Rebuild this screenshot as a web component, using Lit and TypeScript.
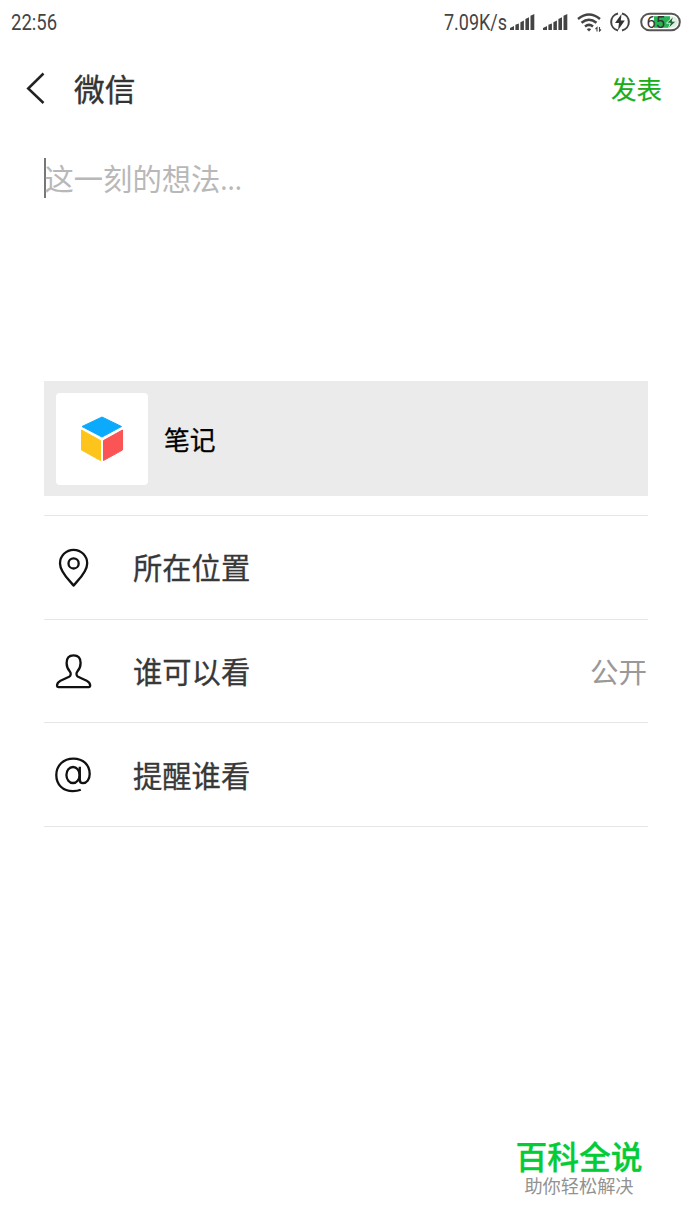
import { LitElement, html, css, svg } from "lit";
import { customElement, property } from "lit/decorators.js";

const signal = html`<svg width="25" height="18" viewBox="0 0 25 18" fill="#444">
  <path d="M0 17v-2l4-2v4zM5.400 17v-5.200l3.500-1.400V17zM10.400 17V9.200l3.500-1.600V17zM15.400 17V6l3.600-1.800v12.800zM20.500 17V2.800L24.300 1v16z" />
</svg>`;

const icons: Record<string, unknown> = {
  place: svg`<path d="M17.600 38.500C14.500 34.500 4 25.500 4 16.400a13.600 13.600 0 0 1 27.200 0C31.200 25.500 20.700 34.500 17.600 38.500Z"/><circle cx="17.600" cy="16.400" r="5.100"/>`,
  person: svg`<path transform="translate(0 1)" d="M17.600 3.300c-4.500 0-7 3-7 7.600 0 3.600 1.400 6.600 3.400 8.900 1.200 1.500.9 4-.9 5L4.500 28.700C2 29.900 1 31.300 1 33.800c0 .9.400 1.300 1.300 1.300h30.600c.9 0 1.300-.4 1.300-1.300 0-2.500-1-3.900-3.500-5.100l-8.600-3.900c-1.800-1-2.100-3.500-.9-5 2-2.300 3.400-5.300 3.400-8.900 0-4.600-2.500-7.600-7-7.600Z"/>`,
  at: svg`<path d="M23.800 11.800v12.700c0 2.400 1 3.700 3 3.700 4 0 6.900-3.900 6.900-9.300 0-8.900-6.600-15.300-16.300-15.300C7.300 3.600.3 10.500.3 20c0 9.700 6.700 16.200 16.500 16.200 3.400 0 5.800-.5 8-1.400"/><ellipse cx="17" cy="20" rx="6.600" ry="8"/>`,
};

@customElement("option-row")
class OptionRow extends LitElement {
  @property() icon = "";
  @property() label = "";
  @property() value = "";
  static styles = css`
    :host {
      display: flex;
      box-sizing: border-box;
      height: 103.700px;
      align-items: center;
      border-bottom: 1px solid #e6e6e6;
      padding: 0 1px 0 12px;
      font-size: 29.300px;
      line-height: 44px;
      color: #383838;
    }
    svg { width: 36px; height: 40px; fill: none; stroke: #111; stroke-width: 2.300; stroke-linejoin: round; margin-right: 41px; overflow: visible; }
    .label { flex: 1; padding-bottom: 2px; -webkit-text-stroke: 0.300px; }
    .value { color: #999; font-size: 28.500px; }
  `;
  render() {
    return html`<svg viewBox="0 0 36 40">${icons[this.icon]}</svg>
      <span class="label">${this.label}</span><span class="value">${this.value}</span>`;
  }
}

@customElement("app-root")
class AppRoot extends LitElement {
  static styles = css`
    :host {
      display: flex;
      flex-direction: column;
      box-sizing: border-box;
      height: 1230px;
      background: #fff;
      overflow: hidden;
      font-family: "Noto Sans CJK SC", "Noto Sans", sans-serif;
    }
    svg { display: block; flex: none; }
    .status { display: flex; height: 44px; padding: 0 11px; align-items: center; font: 21.500px/44px Roboto, sans-serif; color: #444; }
    .clock { flex: 1; }
    .clock span, .rate span { display: inline-block; padding-top: 1px; transform: scaleX(0.86); transform-origin: left; }
    .rate { width: 67px; }
    .rate span { transform: scaleX(0.835); margin-left: 1px; }
    .signals { display: flex; gap: 8px; margin-right: 9px; }
    .wifi { margin-right: 8px; }
    .charge { margin-right: 10px; }
    header { display: flex; align-items: center; height: 90px; padding: 0 30px 2px 26px; box-sizing: border-box; }
    h1 { flex: 1; margin: 0 0 2px 28px; font-size: 30.700px; font-weight: 400; color: #333; -webkit-text-stroke: 0.400px; }
    .post { margin-bottom: 2px; font-size: 25.500px; color: #1aad19; -webkit-text-stroke: 0.200px; }
    .editor { display: flex; height: 223px; margin: 24px 44px 0; align-items: flex-start; }
    .caret { width: 2px; height: 40px; background: #777; }
    .hint { font-size: 29.300px; line-height: 38px; color: #b8b8b8; margin-left: -1.500px; }
    .dots { font-family: "Noto Sans", sans-serif; font-size: 27px; }
    .card { display: flex; align-items: center; height: 115px; margin: 0 44px 19px; padding-left: 12px; background: #ebebeb; font-size: 25.800px; color: #000; }
    .thumb { display: grid; place-items: center; width: 92px; height: 92px; margin-right: 16px; border-radius: 4px; background: #fff; }
    .card span { padding-bottom: 1px; -webkit-text-stroke: 0.300px; }
    .options { margin: 0 44px; border-top: 1px solid #e6e6e6; }
    .brand { display: flex; flex-direction: column; align-items: center; align-self: flex-end; width: 128px; margin: auto 49px 33px 0; }
    .name { font-size: 31.800px; line-height: 36px; font-weight: 500; color: #05cb36; white-space: nowrap; -webkit-text-stroke: 0.300px; }
    .slogan { font-size: 18.200px; line-height: 24px; color: #929292; white-space: nowrap; }
  `;
  render() {
    return html`
      <div class="status">
        <div class="clock"><span>22:56</span></div>
        <div class="rate"><span>7.09K/s</span></div>
        <div class="signals">${signal}${signal}</div>
        <svg class="wifi" width="25" height="20" viewBox="0 0 25 20" fill="none" stroke="#444" stroke-width="2.500">
          <path d="M1 7Q12 -2 23 7M4.500 10.800Q12 4.600 19.500 10.800M8 14.500Q12 11.300 16 14.500" />
          <path d="M9.800 17.200Q12 15.200 14.200 17.200L12 19.500Z" fill="#444" stroke="none" />
          <path d="M20 19.500v-4l-1.500 1.500M22.500 15v4l1.500-1.500" stroke-width="1.100" />
        </svg>
        <svg class="charge" width="20" height="20" viewBox="0 0 20 20" fill="none" stroke="#444" stroke-width="2">
          <path d="M8 1.500a8.700 8.700 0 0 0 0 17M12 1.500a8.700 8.700 0 0 1 0 17" />
          <path d="M11.500 2 5 11h4L8 18.200 14.800 8.500h-4Z" fill="#333" stroke="none" />
        </svg>
        <svg width="41" height="20" viewBox="0 0 41 20">
          <path d="M14 4.200h16v11.600H14z" fill="#27b455" />
          <path d="M30 4.200h2a5.800 5.800 0 0 1 0 11.600h-2z" fill="#dcefe1" />
          <rect x="1.200" y="1.700" width="38.600" height="16.600" rx="8.300" fill="none" stroke="#555" stroke-width="2" />
          <text x="6.500" y="15.700" font-family="Roboto" font-size="16.500" fill="#333">65</text>
          <path d="M33.500 4.200l-7 7h3.800l-2 5.500 8-7.500h-4z" fill="#226b38" stroke="#fff" stroke-width=".8" />
        </svg>
      </div>
      <header>
        <svg width="20" height="32" viewBox="0 0 20 32" fill="none" stroke="#222" stroke-width="2.500"><path d="M17.500 1.500 2.200 16.500 17.500 31" /></svg>
        <h1>微信</h1>
        <span class="post">发表</span>
      </header>
      <div class="editor"><i class="caret"></i><span class="hint">这一刻的想法<span class="dots">...</span></span></div>
      <div class="card">
        <div class="thumb">
          <svg width="44" height="46" viewBox="0 0 44 46">
            <path d="M22 1 41.500 10.500 22 21 2 10.500Z" fill="#0caafc" stroke="#0caafc" stroke-linejoin="round" />
            <path d="M1.500 14 20.500 24.500V44.500L1.500 34Z" fill="#fdc51c" stroke="#fdc51c" stroke-linejoin="round" />
            <path d="M42.500 14 23.500 24.500V44.500L42.500 34Z" fill="#fb5454" stroke="#fb5454" stroke-linejoin="round" />
          </svg>
        </div>
        <span>笔记</span>
      </div>
      <div class="options">
        <option-row icon="place" label="所在位置"></option-row>
        <option-row icon="person" label="谁可以看" value="公开"></option-row>
        <option-row icon="at" label="提醒谁看"></option-row>
      </div>
      <div class="brand"><span class="name">百科全说</span><span class="slogan">助你轻松解决</span></div>
    `;
  }
}
